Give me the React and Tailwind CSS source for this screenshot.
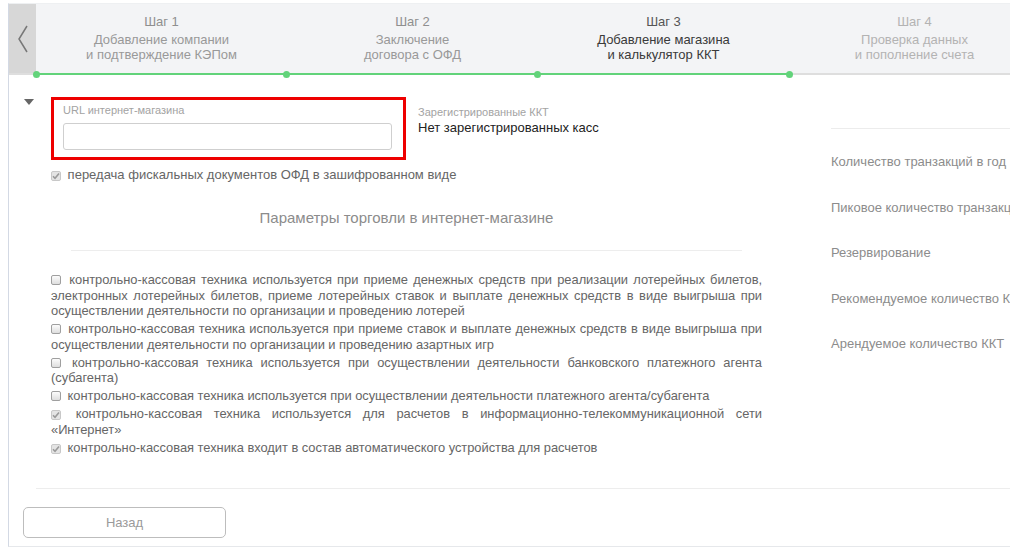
import React from "react";

const steps = [
  { n: "Шаг 1", l1: "Добавление компании", l2: "и подтверждение КЭПом", tone: "done" },
  { n: "Шаг 2", l1: "Заключение", l2: "договора с ОФД", tone: "done" },
  { n: "Шаг 3", l1: "Добавление магазина", l2: "и калькулятор ККТ", tone: "active" },
  { n: "Шаг 4", l1: "Проверка данных", l2: "и пополнение счета", tone: "next" },
];

const options = [
  {
    checked: false,
    text: "контрольно-кассовая техника используется при приеме денежных средств при реализации лотерейных билетов, электронных лотерейных билетов, приеме лотерейных ставок и выплате денежных средств в виде выигрыша при осуществлении деятельности по организации и проведению лотерей",
  },
  {
    checked: false,
    text: "контрольно-кассовая техника используется при приеме ставок и выплате денежных средств в виде выигрыша при осуществлении деятельности по организации и проведению азартных игр",
  },
  {
    checked: false,
    text: "контрольно-кассовая техника используется при осуществлении деятельности банковского платежного агента (субагента)",
  },
  {
    checked: false,
    text: "контрольно-кассовая техника используется при осуществлении деятельности платежного агента/субагента",
  },
  {
    checked: true,
    text: "контрольно-кассовая техника используется для расчетов в информационно-телекоммуникационной сети «Интернет»",
  },
  {
    checked: true,
    text: "контрольно-кассовая техника входит в состав автоматического устройства для расчетов",
  },
];

const calc = [
  "Количество транзакций в год",
  "Пиковое количество транзакций в день",
  "Резервирование",
  "Рекомендуемое количество ККТ",
  "Арендуемое количество ККТ",
];

function Box({ checked }) {
  if (checked) {
    return (
      <span className="inline-flex items-center justify-center w-[10px] h-[10px] mr-[3px] align-[-1px] rounded-[2px] border border-[#c8c8c8] bg-[#e4e4e4]">
        <svg width="8" height="8" viewBox="0 0 8 8">
          <path d="M1 4.2 L3 6.2 L7 1.5" fill="none" stroke="#9a9a9a" strokeWidth="1.6" />
        </svg>
      </span>
    );
  }
  return (
    <span className="inline-block w-[10px] h-[10px] mr-[3px] align-[-1px] rounded-[2px] border border-[#9f9f9f] bg-gradient-to-b from-[#fcfcfc] to-[#dedede]"></span>
  );
}

function Step({ step }) {
  const top =
    step.tone === "active" ? "text-[#555]" : step.tone === "next" ? "text-[#b3b3b3]" : "text-[#8f8f8f]";
  const title =
    step.tone === "active" ? "text-[#3a3a3a]" : step.tone === "next" ? "text-[#b3b3b3]" : "text-[#999]";
  return (
    <div className="w-[251px] shrink-0 text-center pt-[10px] text-[13px] leading-[15px]">
      <div className={"mb-[3px] " + top}>{step.n}</div>
      <div className={title}>{step.l1}</div>
      <div className={title}>{step.l2}</div>
    </div>
  );
}

export default function App() {
  return (
    <div className="w-[1010px] h-[551px] overflow-hidden bg-white font-['Liberation_Sans',Arial,sans-serif]">
      <div className="ml-[8px] mt-[3px] w-[1040px] h-[544px] border-l border-l-[#d3d9e4] border-t border-t-[#eef0f2] border-b border-b-[#e6e8eb] flex flex-col">
        {/* steps header */}
        <div className="flex h-[69px] bg-[#f3f4f6]">
          <div className="w-[27px] shrink-0 bg-[#d7d7d7] flex items-center justify-center">
            <svg width="12" height="28" viewBox="0 0 12 28">
              <polyline points="10,1 2,14 10,27" fill="none" stroke="#777" strokeWidth="1.5" />
            </svg>
          </div>
          {steps.map((s) => (
            <Step key={s.n} step={s} />
          ))}
        </div>
        <div className="relative h-[2px] bg-[#dedede]">
          <div className="absolute left-[27px] top-0 h-[2px] w-[754px] bg-[#62d37a]"></div>
          <span className="absolute left-[24px] top-[-2.5px] w-[7px] h-[7px] rounded-full bg-[#62d37a]"></span>
          <span className="absolute left-[274px] top-[-2.5px] w-[7px] h-[7px] rounded-full bg-[#62d37a]"></span>
          <span className="absolute left-[525px] top-[-2.5px] w-[7px] h-[7px] rounded-full bg-[#62d37a]"></span>
          <span className="absolute left-[777px] top-[-2.5px] w-[7px] h-[7px] rounded-full bg-[#62d37a]"></span>
        </div>

        {/* body */}
        <div className="flex h-[413px] shrink-0">
          <div className="w-[760px] shrink-0 pl-[15px] pr-[7px]">
            <div className="flex mt-[22px]">
              <div className="mt-[2px] w-0 h-0 border-l-[5.5px] border-r-[5.5px] border-t-[6px] border-l-transparent border-r-transparent border-t-[#666]"></div>
              <div className="ml-[17px] w-[355px] h-[63px] border-[3px] border-[#ee0000] pl-[9px] pr-[11px] pt-[3px]">
                <div className="text-[11px] leading-[14px] text-[#a3a3a3]">URL интернет-магазина</div>
                <div className="mt-[6px] h-[27px] border border-[#cfcfcf] rounded-[3px] bg-white"></div>
              </div>
              <div className="ml-[12px] pt-[8px]">
                <div className="text-[11px] leading-[14px] text-[#a3a3a3]">Зарегистрированные ККТ</div>
                <div className="text-[13px] leading-[18px] text-[#222]">Нет зарегистрированных касс</div>
              </div>
            </div>

            <div className="pl-[27px]">
              <div className="mt-[6px] text-[13px] leading-[18px] text-[#666]">
                <Box checked /> передача фискальных документов ОФД в зашифрованном виде
              </div>
              <div className="mt-[24px] text-center text-[15px] leading-[20px] text-[#8c8c8c]">
                Параметры торговли в интернет-магазине
              </div>
              <div className="mt-[22px] mx-[20px] border-t border-t-[#ededed]"></div>
              <div className="mt-[21px] flex flex-col gap-[2.5px]">
                {options.map((o, i) => (
                  <div key={i} className="text-[12.9px] tracking-[-0.03px] leading-[15.5px] text-[#666] text-justify">
                    <Box checked={o.checked} /> {o.text}
                  </div>
                ))}
              </div>
            </div>
          </div>

          <div className="flex-1 pl-[62px] pt-[53px]">
            <div className="border-t border-t-[#ececec]"></div>
            <div className="mt-[24px] flex flex-col gap-[27.5px]">
              {calc.map((c) => (
                <div key={c} className="whitespace-nowrap text-[13px] leading-[18px] text-[#8c8c8c]">
                  {c}
                </div>
              ))}
            </div>
          </div>
        </div>

        {/* footer */}
        <div className="ml-[27px] border-t border-t-[#ededed]"></div>
        <div className="mt-[18px] ml-[14px]">
          <button className="w-[203px] h-[31px] border border-[#bdbdbd] rounded-[5px] bg-white text-[13px] text-[#9a9a9a]">
            Назад
          </button>
        </div>
      </div>
    </div>
  );
}
